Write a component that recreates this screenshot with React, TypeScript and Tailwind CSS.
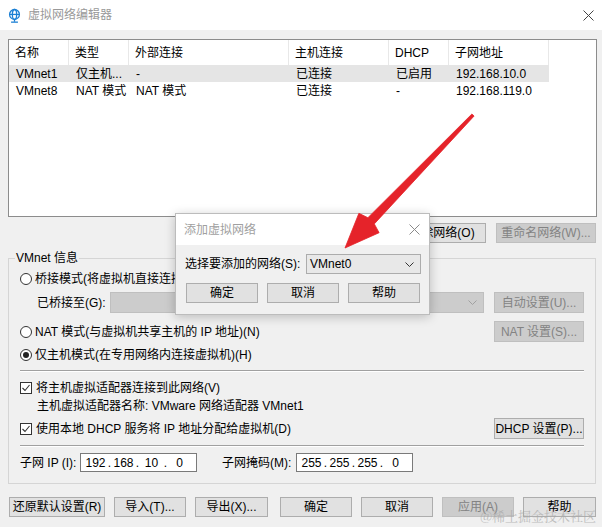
import React from "react";

function Btn({
  children,
  className = "",
  disabled = false,
}: {
  children: React.ReactNode;
  className?: string;
  disabled?: boolean;
}) {
  return (
    <div
      className={
        "flex items-center justify-center border leading-[16px] whitespace-nowrap shrink-0 " +
        (disabled
          ? "bg-[#cccccc] border-[#bfbfbf] text-[#838383] "
          : "bg-[#e1e1e1] border-[#adadad] text-black ") +
        className
      }
    >
      {children}
    </div>
  );
}

function Chevron({ color = "#333" }: { color?: string }) {
  return (
    <svg width="9" height="5" viewBox="0 0 9 5">
      <polyline points="0.5,0.5 4.5,4.5 8.5,0.5" fill="none" stroke={color} strokeWidth="1" />
    </svg>
  );
}

function Radio({ checked = false }: { checked?: boolean }) {
  return (
    <div className="w-[12px] h-[12px] rounded-full border border-[#333] bg-white flex items-center justify-center shrink-0">
      {checked && <div className="w-[6px] h-[6px] rounded-full bg-[#222]" />}
    </div>
  );
}

function Check() {
  return (
    <div className="w-[12px] h-[12px] border border-[#333] bg-white flex items-center justify-center shrink-0">
      <svg width="10" height="10" viewBox="0 0 10 10">
        <polyline points="1.5,5 4,7.5 8.5,2" fill="none" stroke="#333" strokeWidth="1.1" />
      </svg>
    </div>
  );
}

function IpBox({ parts, className }: { parts: string[]; className: string }) {
  return (
    <div className={"h-[19px] border border-[#7a7a7a] bg-white flex items-center pl-[4px] " + className}>
      {parts.map((p, i) => (
        <React.Fragment key={i}>
          <span className="w-[21px] text-center">{p}</span>
          {i < 3 && <span className="w-[7px] text-center">.</span>}
        </React.Fragment>
      ))}
    </div>
  );
}

const cols = "grid grid-cols-[60px_60px_160px_100px_60px_100px_1fr]";

export default function App() {
  const header = ["名称", "类型", "外部连接", "主机连接", "DHCP", "子网地址"];
  const rows = [
    ["VMnet1", "仅主机...", "-", "已连接", "已启用", "192.168.10.0"],
    ["VMnet8", "NAT 模式", "NAT 模式", "已连接", "-", "192.168.119.0"],
  ];
  return (
    <div className="relative w-[602px] h-[527px] overflow-hidden bg-[#f0f0f0] text-[12px] leading-[16px] text-black font-['Liberation_Sans','Noto_Sans_CJK_SC',sans-serif]">
      {/* title bar */}
      <div className="h-[30px] bg-white flex items-center pl-[7px] pr-[6px]">
        <svg width="15" height="15" viewBox="0 0 14 14" className="shrink-0">
          <g fill="none" stroke="#1a7fd4" strokeWidth="1.2">
            <circle cx="7" cy="6" r="4.6" />
            <ellipse cx="7" cy="6" rx="2" ry="4.6" />
            <line x1="2.4" y1="6" x2="11.6" y2="6" />
            <line x1="7" y1="10.6" x2="7" y2="12.8" />
            <line x1="3.8" y1="13.2" x2="10.2" y2="13.2" />
          </g>
        </svg>
        <span className="ml-[6px] text-[#999999]">虚拟网络编辑器</span>
        <div className="flex-1" />
        <svg width="11" height="11" viewBox="0 0 11 11" className="mr-[2px]">
          <line x1="0.5" y1="0.5" x2="10.5" y2="10.5" stroke="#444" strokeWidth="1" />
          <line x1="10.5" y1="0.5" x2="0.5" y2="10.5" stroke="#444" strokeWidth="1" />
        </svg>
      </div>

      <div className="pl-[8px] pr-[5px]">
        {/* list */}
        <div className="mt-[9px] h-[178px] border border-[#8c8c8c] bg-white">
          <div className={cols + " h-[25px]"}>
            {header.map((h, i) => (
              <div key={i} className="border-r border-[#e8e8e8] pl-[6px] flex items-center whitespace-nowrap">
                {h}
              </div>
            ))}
            <div />
          </div>
          {rows.map((r, ri) => (
            <div key={ri} className={cols + " h-[17px]"}>
              {r.map((c, ci) => (
                <div
                  key={ci}
                  className={
                    "pl-[7px] flex items-center whitespace-nowrap overflow-hidden " +
                    (ri === 0 ? "bg-[#e5e5e5]" : "")
                  }
                >
                  {c}
                </div>
              ))}
              <div />
            </div>
          ))}
        </div>

        {/* buttons under list */}
        <div className="mt-[6px] flex justify-end gap-[10px] pr-[1px]">
          <Btn className="w-[88px] h-[20px]">添加网络(E)...</Btn>
          <Btn className="w-[88px] h-[20px]">移除网络(O)</Btn>
          <Btn className="w-[100px] h-[20px]" disabled>
            重命名网络(W)...
          </Btn>
        </div>

        {/* group */}
        <fieldset className="mt-[7px] mr-[1px] border border-[#d5d5d5] pl-[11px] pr-[11px] pt-[2px] pb-[11px]">
          <legend className="-ml-[5px] px-[1px] leading-[16px]">VMnet 信息</legend>

          <div className="h-[22px] flex items-center">
            <Radio />
            <span className="ml-[3px]">桥接模式(将虚拟机直接连接到外部网络)(B)</span>
          </div>

          <div className="mt-[2px] h-[21px] flex items-center">
            <span className="ml-[17px] w-[73px] shrink-0">已桥接至(G):</span>
            <div className="h-[21px] flex-1 bg-[#cccccc] border border-[#bfbfbf] flex items-center justify-end pr-[6px]">
              <Chevron color="#a0a0a0" />
            </div>
            <Btn className="ml-[10px] w-[90px] h-[21px]" disabled>
              自动设置(U)...
            </Btn>
          </div>

          <div className="mt-[8px] h-[21px] flex items-center">
            <Radio />
            <span className="ml-[3px]">NAT 模式(与虚拟机共享主机的 IP 地址)(N)</span>
            <div className="flex-1" />
            <Btn className="w-[90px] h-[21px]" disabled>
              NAT 设置(S)...
            </Btn>
          </div>

          <div className="mt-[2px] h-[22px] flex items-center">
            <Radio checked />
            <span className="ml-[3px]">仅主机模式(在专用网络内连接虚拟机)(H)</span>
          </div>

          <div className="mt-[4px] border-t border-[#a0a0a0] border-b border-b-white" />

          <div className="mt-[6px] h-[20px] flex items-center">
            <Check />
            <span className="ml-[4px]">将主机虚拟适配器连接到此网络(V)</span>
          </div>
          <div className="h-[16px] flex items-center pl-[17px]">主机虚拟适配器名称: VMware 网络适配器 VMnet1</div>

          <div className="mt-[4px] h-[21px] flex items-center">
            <Check />
            <span className="ml-[4px]">使用本地 DHCP 服务将 IP 地址分配给虚拟机(D)</span>
            <div className="flex-1" />
            <Btn className="w-[90px] h-[21px]">DHCP 设置(P)...</Btn>
          </div>

          <div className="mt-[6px] border-t border-[#a0a0a0] border-b border-b-white" />

          <div className="mt-[6px] h-[19px] flex items-center">
            <span className="w-[60px] shrink-0">子网 IP (I):</span>
            <IpBox parts={["192", "168", "10", "0"]} className="w-[117px]" />
            <span className="ml-[25px] w-[74px] shrink-0">子网掩码(M):</span>
            <IpBox parts={["255", "255", "255", "0"]} className="w-[117px]" />
          </div>
        </fieldset>

        {/* bottom buttons */}
        <div className="mt-[13px] flex items-center pl-[1px] pr-[1px]">
          <div className="flex gap-[9px]">
            <Btn className="w-[96px] h-[20px]">还原默认设置(R)</Btn>
            <Btn className="w-[72px] h-[20px]">导入(T)...</Btn>
            <Btn className="w-[73px] h-[20px]">导出(X)...</Btn>
          </div>
          <div className="flex-1" />
          <div className="flex gap-[9px]">
            <Btn className="w-[72px] h-[20px]">确定</Btn>
            <Btn className="w-[72px] h-[20px]">取消</Btn>
            <Btn className="w-[72px] h-[20px]" disabled>
              应用(A)
            </Btn>
            <Btn className="w-[73px] h-[20px]">帮助</Btn>
          </div>
        </div>
      </div>

      {/* dialog */}
      <div className="absolute left-[175px] top-[213px] w-[255px] h-[102px] border border-[#bcbcbc] bg-[#f0f0f0] shadow-[0_2px_10px_rgba(0,0,0,0.22)] flex flex-col">
        <div className="h-[31px] bg-white flex items-center pl-[8px] pr-[9px]">
          <span className="text-[#a0a0a0]">添加虚拟网络</span>
          <div className="flex-1" />
          <svg width="11" height="11" viewBox="0 0 11 11">
            <line x1="0.5" y1="0.5" x2="10.5" y2="10.5" stroke="#8a8a8a" strokeWidth="1" />
            <line x1="10.5" y1="0.5" x2="0.5" y2="10.5" stroke="#8a8a8a" strokeWidth="1" />
          </svg>
        </div>
        <div className="pl-[9px] pr-[8px] pt-[9px]">
          <div className="h-[20px] flex items-center">
            <span className="w-[121px] shrink-0">选择要添加的网络(S):</span>
            <div className="flex-1 h-[20px] bg-[#e8e8e8] border border-[#acacac] flex items-center pl-[3px] pr-[6px]">
              <span>VMnet0</span>
              <div className="flex-1" />
              <Chevron />
            </div>
          </div>
          <div className="mt-[9px] flex gap-[9px] pl-[1px]">
            <Btn className="w-[72px] h-[20px]">确定</Btn>
            <Btn className="w-[72px] h-[20px]">取消</Btn>
            <Btn className="w-[72px] h-[20px]">帮助</Btn>
          </div>
        </div>
      </div>

      {/* red arrow annotation */}
      <svg className="absolute left-[340px] top-[110px]" width="140" height="145" viewBox="0 0 140 145">
        <polygon
          points="5,138 18.9,103.3 27.9,107.7 131.9,4 134.1,6 34.3,113.9 39.1,122.7"
          fill="#e5232a"
          stroke="#e5232a"
          strokeWidth="0.8"
          strokeLinejoin="round"
        />
      </svg>

      {/* watermark */}
      <div className="absolute right-[6px] bottom-[2px] text-[13px] leading-[18px] text-[#a8a8a8] opacity-70 font-['Noto_Serif_CJK_SC','Noto_Sans_CJK_SC',serif]">
        @稀土掘金技术社区
      </div>
    </div>
  );
}
